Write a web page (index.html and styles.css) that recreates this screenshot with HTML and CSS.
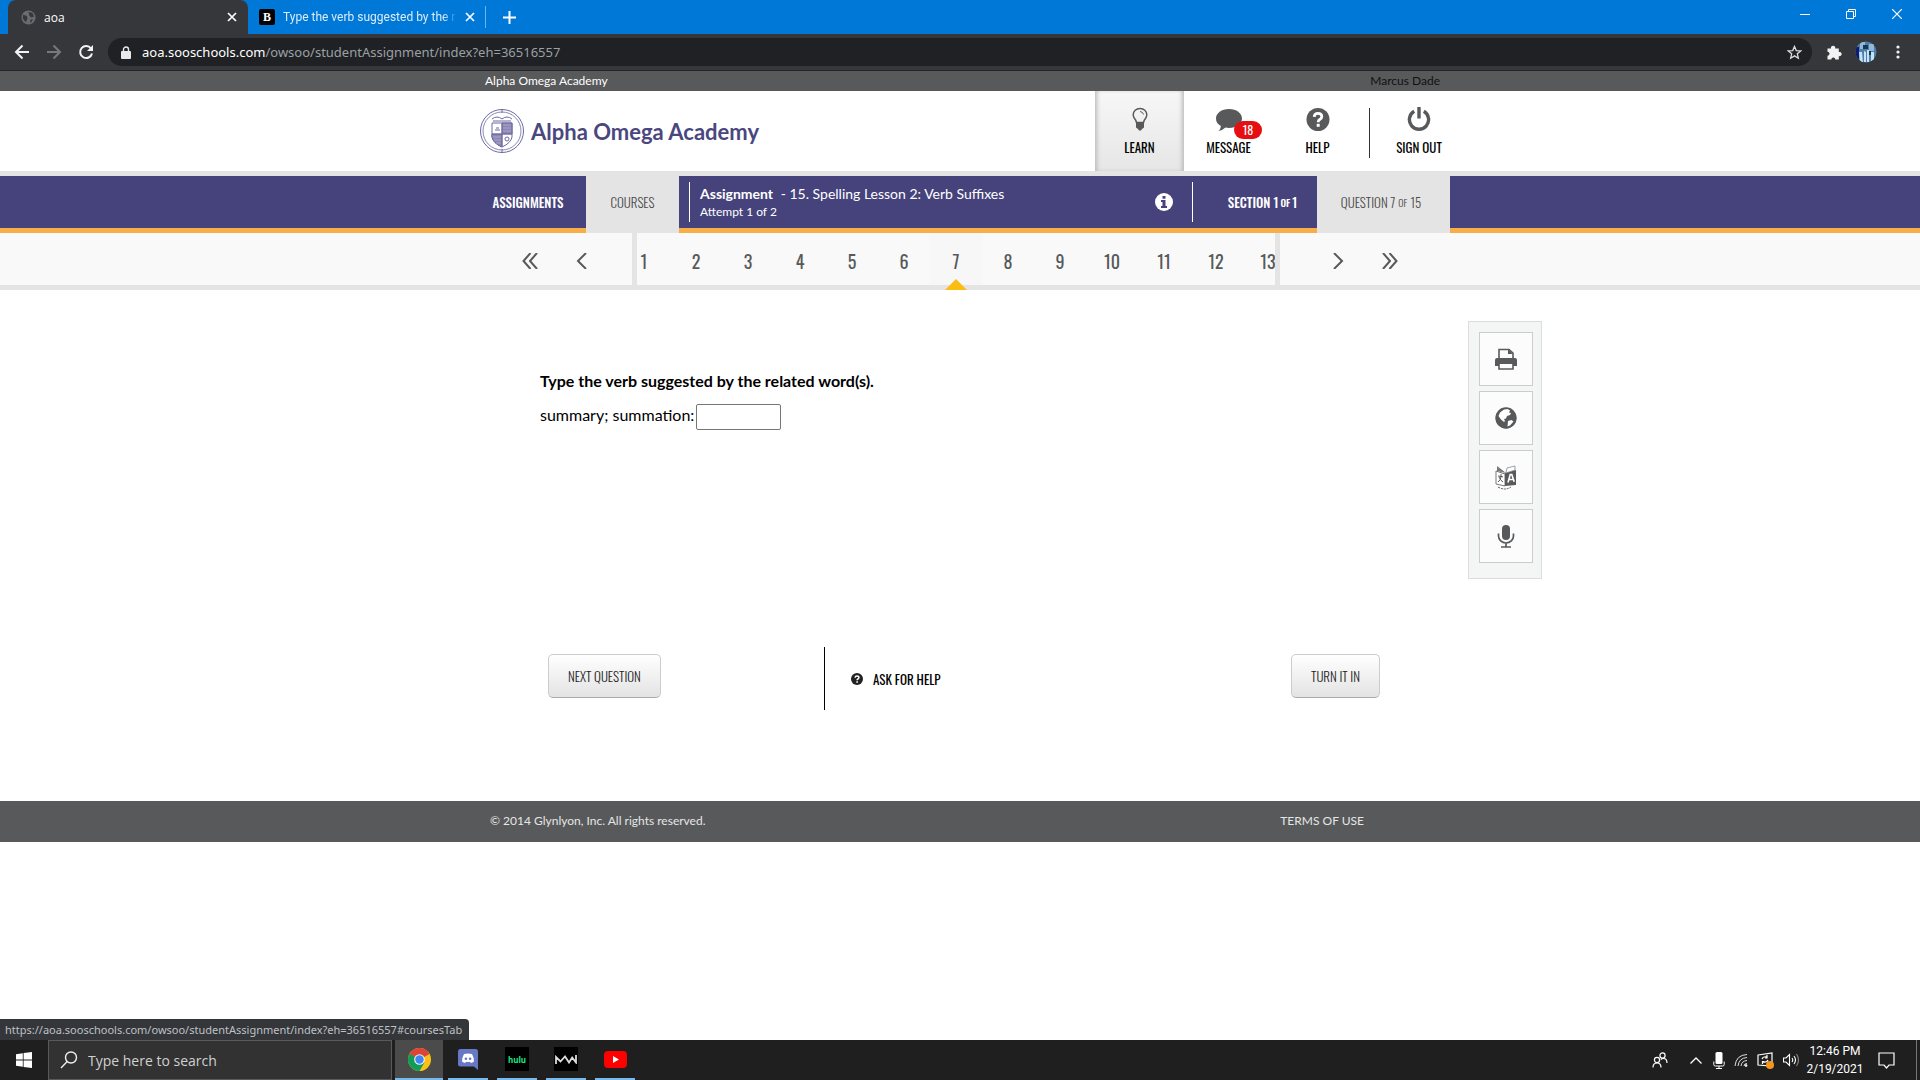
FILE: index.html
```html
<!DOCTYPE html>
<html lang="en">
<head>
    <meta charset="UTF-8">
    <title>aoa</title>
    <meta name="viewport" content="width=device-width, initial-scale=1.0">
    <link rel="stylesheet" href="styles.css">
</head>
<body>
    <!-- browser tabs -->
    <div class="tabstrip">
        <div class="tab active">
            <svg width="15" height="15" viewBox="0 0 16 16"><circle cx="8" cy="8" r="7.5" fill="#6b6c6f"/><path d="M2 5l4 1 1 3-2 4-3-4zM8 2l4 1 2 4-3 1-2-2zM10 10l3 0-3 4z" fill="#36373b"/></svg>
            <span class="tab-title">aoa</span>
            <button class="tab-close" aria-label="Close tab"><svg width="10" height="10" viewBox="0 0 10 10"><path d="M1 1l8 8M9 1l-8 8" stroke="currentColor" stroke-width="1.7"/></svg></button>
        </div>
        <div class="tab">
            <span class="favicon-b">B</span>
            <span class="tab-title fade">Type the verb suggested by the r</span>
            <button class="tab-close" aria-label="Close tab"><svg width="10" height="10" viewBox="0 0 10 10"><path d="M1 1l8 8M9 1l-8 8" stroke="currentColor" stroke-width="1.7"/></svg></button>
        </div>
        <button class="new-tab" aria-label="New tab"><svg width="13" height="13" viewBox="0 0 13 13"><path d="M6.5 0v13M0 6.5h13" stroke="currentColor" stroke-width="2"/></svg></button>
        <div class="window-buttons">
            <button aria-label="Minimize"><svg width="10" height="10" viewBox="0 0 10 10"><path d="M0 5.5h10" stroke="currentColor"/></svg></button>
            <button aria-label="Restore"><svg width="10" height="10" viewBox="0 0 10 10" fill="none" stroke="currentColor"><path d="M.5 2.5h7v7h-7zM2.500 2.500v-2h7v7h-2"/></svg></button>
            <button aria-label="Close"><svg width="10" height="10" viewBox="0 0 10 10"><path d="M0 0l10 10M10 0l-10 10" stroke="currentColor" stroke-width="1.2"/></svg></button>
        </div>
    </div>
    <div class="toolbar">
        <button aria-label="Back"><svg width="16" height="16" viewBox="0 0 16 16" fill="none" stroke="#f1f3f4" stroke-width="2"><path d="M15 8H2M8.500 1.500L2 8l6.500 6.500"/></svg></button>
        <button aria-label="Forward"><svg width="16" height="16" viewBox="0 0 16 16" fill="none" stroke="#77797d" stroke-width="2"><path d="M1 8h13M7.500 1.500L14 8l-6.500 6.500"/></svg></button>
        <button aria-label="Reload"><svg width="16" height="16" viewBox="0 0 16 16"><path d="M13 4.500A6 6 0 1 0 14 9.500" fill="none" stroke="#f1f3f4" stroke-width="2"/><path d="M15 1v6H9z" fill="#f1f3f4"/></svg></button>
        <div class="omnibox">
            <svg width="10" height="13" viewBox="0 0 10 13"><rect y="5" width="10" height="8" rx="1" fill="#e8eaed"/><path d="M2.500 5V3.500a2.500 2.500 0 0 1 5 0V5" fill="none" stroke="#e8eaed" stroke-width="1.400"/></svg>
            <span class="url"><b>aoa.sooschools.com</b>/owsoo/studentAssignment/index?eh=36516557</span>
            <button aria-label="Bookmark this tab"><svg width="15" height="15" viewBox="0 0 16 16"><path d="M8 1.500l1.900 4.400 4.700.4-3.600 3.100 1.100 4.700L8 11.600l-4.100 2.500L5 9.400 1.400 6.300l4.700-.4z" fill="none" stroke="#dadce0" stroke-width="1.400"/></svg></button>
        </div>
        <button aria-label="Extensions"><svg width="16" height="16" viewBox="0 0 16 16"><path d="M1.500 4.500H5a2.200 2.200 0 1 1 4.200 0h3.600V8a2.200 2.200 0 1 1 0 4.200v3.300H9.300a2 2 0 0 0-4 0H1.500v-3.700a2 2 0 0 0 0-4z" fill="#f1f3f4"/></svg></button>
        <button aria-label="Profile"><svg width="22" height="22" viewBox="0 0 22 22"><defs><clipPath id="av"><circle cx="11" cy="11" r="10.500"/></clipPath></defs><g clip-path="url(#av)"><path fill="#4f7ea8" d="M0 0h22v22H0z"/><path fill="#8fb9dc" d="M5 1h5v7H5zM14 3h5v7h-5z"/><path fill="#0d1b70" d="M0 6h4v13H0z"/><path fill="#c4e3f6" d="M4 11h3l1 11H5zM9 10l2 1v10H9zM12 9h2v12h-2zM16 11h3v9h-3z"/><path fill="#1d3450" d="M8 4h5v4H8zM14 10h2v4h-2z"/></g></svg></button>
        <button aria-label="Menu"><svg width="4" height="16" viewBox="0 0 4 16" fill="#f1f3f4"><circle cx="2" cy="3" r="1.600"/><circle cx="2" cy="8" r="1.600"/><circle cx="2" cy="13" r="1.600"/></svg></button>
    </div>

    <div class="page">
        <div class="topbar">
            <div class="container">
                <span>Alpha Omega Academy</span>
                <span class="user">Marcus Dade</span>
            </div>
        </div>

        <header class="header">
            <div class="container">
                <a class="logo" href="#">
                    <svg width="46" height="46" viewBox="0 0 46 46" fill="none" stroke="#6c69a0">
                        <circle cx="23" cy="23" r="21.500"/><circle cx="23" cy="23" r="19" stroke-width=".8"/>
                        <path d="M23 1v4M23 41v4M13 11q5-4 10 0q5-4 10 0M14 13h18" />
                        <path d="M13 15h20v14q-1 6-10 10q-9-4-10-10z"/>
                        <path d="M23 15h10v11H23zM13 26h10v13q-9-4-10-10z" fill="#8a87b5"/>
                        <path d="M23 15v24M13 26h20" stroke-width=".8"/>
                        <path d="M16 22h5M17 20h3" /><circle cx="28" cy="31" r="2"/>
                        <path d="M24 17h8M24 20h8M24 23h8M14 29h8M15 32h7M17 35h5" stroke="#c0bedb" stroke-width=".6"/>
                    </svg>
                    <span>Alpha Omega Academy</span>
                </a>
                <nav class="menu">
                    <a class="menu-item active" href="#">
                        <svg width="24" height="24" viewBox="0 0 24 24"><path d="M8.500 15.500Q8 13 6.200 11a7 7 0 0 1-1-3.200C5.200 4 8.200 1.500 12 1.500S18.800 4 18.800 7.800a7 7 0 0 1-1 3.200Q16 13 15.500 15.500z" fill="none" stroke="#58595b" stroke-width="1.500"/><path d="M12 4.500q3 .3 3.500 3" fill="none" stroke="#58595b"/><path d="M8 15.500h8v5l-2 1.500-1 1.500h-2L10 22l-2-1.500z" fill="#58595b"/></svg>
                        <span>LEARN</span>
                    </a>
                    <a class="menu-item" href="#">
                        <svg width="28" height="24" viewBox="0 0 28 24"><path d="M14 2c7.500 0 13 4.200 13 9.500S21.500 21 14 21q-2 0-3.500-.4Q7.500 23.500 3.500 24q2.200-2 2.400-5Q1 16.500 1 11.500C1 6.200 6.500 2 14 2z" fill="#58595b"/></svg>
                        <span class="badge">18</span>
                        <span>MESSAGE</span>
                    </a>
                    <a class="menu-item" href="#">
                        <svg width="24" height="24" viewBox="0 0 24 24"><circle cx="12" cy="12.500" r="11.500" fill="#58595b"/><path d="M8.200 9.800Q8.400 6.400 12 6.400q3.800 0 3.800 3.200 0 1.900-2 2.900-1.600.8-1.600 2.700" fill="none" stroke="#fff" stroke-width="2.800"/><path d="M10.700 16.800h3v3h-3z" fill="#fff"/></svg>
                        <span>HELP</span>
                    </a>
                    <a class="menu-item signout" href="#">
                        <svg width="24" height="24" viewBox="0 0 24 24" fill="none" stroke="#58595b" stroke-width="3.400"><path d="M7.200 4.300a9.600 9.600 0 1 0 9.600 0M12 0v11.500"/></svg>
                        <span>SIGN OUT</span>
                    </a>
                </nav>
            </div>
        </header>

        <nav class="subnav">
            <div class="container">
                <a class="subtab assignments" href="#">ASSIGNMENTS</a>
                <a class="subtab courses active" href="#coursesTab">COURSES</a>
                <div class="assignment">
                    <div class="assignment-text">
                        <div class="assignment-title"><b>Assignment</b> - 15. Spelling Lesson 2: Verb Suffixes</div>
                        <div class="attempt">Attempt 1 of 2</div>
                    </div>
                    <button class="info" aria-label="Assignment info"><svg width="18" height="18" viewBox="0 0 18 18"><circle cx="9" cy="9" r="9" fill="#fff"/><path d="M7.500 3h3v2.700h-3zM6 7h4.500v6H12v2H6v-2h1.500V9H6z" fill="#46437c"/></svg></button>
                </div>
                <a class="subtab section" href="#">SECTION 1 <small>OF</small> 1</a>
                <a class="subtab question active" href="#">QUESTION 7 <small>OF</small> 15</a>
            </div>
        </nav>

        <div class="pager">
            <div class="container">
                <div class="pager-side prev">
                    <button aria-label="First"><svg width="16" height="16" viewBox="0 0 16 16"><path d="M8.500 0L1.500 8l7 8M15 0L8 8l7 8"/></svg></button>
                    <button aria-label="Previous"><svg width="16" height="16" viewBox="0 0 16 16"><path d="M12 0L4 8l8 8"/></svg></button>
                </div>
                <div class="pages">
                    <button>1</button>
                    <button>2</button>
                    <button>3</button>
                    <button>4</button>
                    <button>5</button>
                    <button>6</button>
                    <button class="current">7</button>
                    <button>8</button>
                    <button>9</button>
                    <button>10</button>
                    <button>11</button>
                    <button>12</button>
                    <button>13</button>
                </div>
                <div class="pager-side next">
                    <button aria-label="Next"><svg width="16" height="16" viewBox="0 0 16 16"><path d="M4 0l8 8-8 8"/></svg></button>
                    <button aria-label="Last"><svg width="16" height="16" viewBox="0 0 16 16"><path d="M1 0l7 8-7 8M7.500 0l7 8-7 8"/></svg></button>
                </div>
            </div>
        </div>

        <main class="content">
            <div class="question-area">
                <div class="question-body">
                    <p class="prompt">Type the verb suggested by the related word(s).</p>
                    <p class="answer">
                        <label for="answer">summary; summation:</label>
                        <input type="text" id="answer">
                    </p>
                </div>
                <div class="actions">
                    <button class="btn">NEXT QUESTION</button>
                    <a class="ask" href="#">
                        <svg width="12" height="12" viewBox="0 0 24 24"><circle cx="12" cy="12" r="12" fill="#222"/><path d="M8 9.500Q8.400 6.200 12 6.200q3.800 0 3.800 3 0 1.900-2 2.800-1.600.8-1.600 2.500" fill="none" stroke="#fff" stroke-width="3"/><path d="M10.600 16.500h3.200v3h-3.200z" fill="#fff"/></svg>
                        ASK FOR HELP
                    </a>
                    <button class="btn">TURN IT IN</button>
                </div>
            </div>
            <aside class="tools">
                <button aria-label="Print"><svg width="24" height="22" viewBox="0 0 24 22"><path d="M1 12q0-2 2-2h18q2 0 2 2v6h-4v-2H5v2H1z" fill="#58595b"/><path d="M5 11V1.500h10l4 3.500v6M5 16v5h14v-5" fill="none" stroke="#58595b" stroke-width="1.600"/><path d="M14 1l5 5h-5z" fill="#58595b"/></svg></button>
                <button aria-label="Web"><svg width="22" height="22" viewBox="0 0 22 22"><circle cx="11" cy="11" r="10.300" fill="#58595b"/><path d="M9 2.500l4-.5 2 1.500-1 2 2 .5-1 2-3 1-1 2.500-2 .5 1 2-1 1-3-2.500L3.500 9 5 5.500zM13 14l3.500-1 2 1.500L15 18.500l-2.500 1z" fill="#fff"/><circle cx="11" cy="11" r="10" fill="none" stroke="#58595b" stroke-width="1.300"/></svg></button>
                <button aria-label="Translate"><svg width="24" height="26" viewBox="0 0 24 26"><path d="M2 7l9 3v12l-9-2z" fill="#fff" stroke="#77787a"/><path d="M11 9l11-3v15l-11 1z" fill="#58595b"/><path d="M3 2v5l9 2z" fill="#77787a"/><path d="M13 4l8-2v4l-9 3z" fill="#fff" stroke="#77787a" stroke-width=".7"/><path d="M4 12l5 .8M7 10v2.500Q7 16 4 18M5 13q1 3 4 5" fill="none" stroke="#58595b"/><path d="M14 18.500l2.200-8h1.600l2.400 7.200M14.800 15.500h4.200" fill="none" stroke="#fff" stroke-width="1.600"/><path d="M4 23q7 4 13 0" fill="none" stroke="#58595b" stroke-dasharray="2 1"/></svg></button>
                <button aria-label="Record"><svg width="18" height="24" viewBox="0 0 18 24"><rect x="5" y="1" width="8" height="15" rx="4" fill="#58595b"/><path d="M1.500 9.500v2.500a7.500 7 0 0 0 15 0V9.500M9 19v4M4 23h10" fill="none" stroke="#58595b" stroke-width="1.700"/></svg></button>
            </aside>
        </main>

        <footer class="footer">
            <div class="container">
                <span>© 2014 Glynlyon, Inc. All rights reserved.</span>
                <a href="#">TERMS OF USE</a>
            </div>
        </footer>
        <div class="status">https://aoa.sooschools.com/owsoo/studentAssignment/index?eh=36516557#coursesTab</div>
    </div>

    <!-- windows taskbar -->
    <div class="taskbar">
        <button class="start" aria-label="Start"><svg width="16" height="16" viewBox="0 0 16 16" fill="#fff"><path d="M0 2.200L6.800 1.200v6.400H0zM7.600 1.100L16 0v7.600H7.600zM0 8.400h6.800v6.400L0 13.800zM7.600 8.400H16V16l-8.400-1.100z"/></svg></button>
        <label class="search" for="search">
            <svg width="18" height="18" viewBox="0 0 18 18" fill="none" stroke="#f0f0f0" stroke-width="1.400"><circle cx="11" cy="6.500" r="5.500"/><path d="M7.200 10.500L1 17"/></svg>
            <input type="text" id="search" placeholder="Type here to search">
        </label>
        <button class="app focus" aria-label="Chrome"><svg width="23" height="23" viewBox="0 0 24 24"><circle cx="12" cy="12" r="12" fill="#fbc116"/><path d="M12 12L1.600 6A12 12 0 0 1 22.400 6z" fill="#db4437"/><path d="M1.600 6A12 12 0 0 0 12 24l5.200-9z" fill="#0f9d58"/><path d="M12 6h10.400L12 12zM6.800 15L1.600 6 12 12z" fill="#db4437"/><path d="M1.600 6l5.200 9L12 12z" fill="#0f9d58"/><circle cx="12" cy="12" r="5.600" fill="#f1f1f1"/><circle cx="12" cy="12" r="4.400" fill="#4285f4"/></svg></button>
        <button class="app" aria-label="Discord"><svg width="20" height="21" viewBox="0 0 20 21"><path d="M2.500 0h15A2.500 2.500 0 0 1 20 2.500V21l-4-3.500H2.500A2.500 2.500 0 0 1 0 15V2.500A2.500 2.500 0 0 1 2.500 0z" fill="#6778c4"/><path d="M6 5q4-1 8 0 2 3.500 2 7.500-1.500 1.300-3.200 1.500l-.8-1.300q-2 .6-4 0L7.200 14Q5.500 13.800 4 12.500 4 8.500 6 5z" fill="#fff"/><circle cx="7.900" cy="9.700" r="1.300" fill="#6778c4"/><circle cx="12.100" cy="9.700" r="1.300" fill="#6778c4"/></svg></button>
        <button class="app"><span class="tile hulu">hulu</span></button>
        <button class="app" aria-label="Modern Warfare"><span class="tile"><svg width="22" height="9" viewBox="0 0 22 9" fill="none" stroke="#ddd" stroke-width="1.800"><path d="M1 9V2l4.500 4.500L10 1.500l4 6 3.200-5 3.800 5V0"/></svg></span></button>
        <button class="app" aria-label="YouTube"><svg width="23" height="17" viewBox="0 0 23 17"><rect width="23" height="17" rx="4" fill="#f00"/><path d="M9 5l6 3.500L9 12z" fill="#fff"/></svg></button>
        <div class="tray">
            <svg class="people" width="16" height="16" viewBox="0 0 16 16" fill="none" stroke="#fff" stroke-width="1.200"><circle cx="10.500" cy="3.500" r="2.600"/><circle cx="5" cy="8" r="2.600"/><path d="M1 15.500q0-4.500 4-4.500t4 4.500M8.800 7.500q1-1 2.700-1 3.500 0 3.500 4.500"/></svg>
            <svg class="chevron" width="12" height="7" viewBox="0 0 12 7" fill="none" stroke="#fff" stroke-width="1.300"><path d="M.5 6.500L6 1l5.500 5.500"/></svg>
            <svg width="12" height="17" viewBox="0 0 12 17"><rect x="2.500" width="7" height="12" rx="1.500" fill="#fff"/><path d="M.8 9.500v3q0 1.500 1.500 1.500h7.400q1.500 0 1.500-1.500v-3M6 14v2.500M3 16.500h6" fill="none" stroke="#fff"/></svg>
            <svg width="14" height="14" viewBox="0 0 14 14" fill="none" stroke="#ddd"><path d="M1 13Q2 2 13 1.500M4 13Q5 5 13 4.500M7 13q.5-5 6-5.500M10 13q0-2.500 3-2.500"/><circle cx="12" cy="12.500" r="1" fill="#fff"/></svg>
            <svg width="17" height="17" viewBox="0 0 17 17" fill="none" stroke="#fff" stroke-width="1.200"><path d="M1 3l14-2v13L1 13zM5 7q1-3 5-2M10 3v3H8M11 8q-1 3-5 2M5.500 12v-2.500h2"/><circle cx="13" cy="13" r="4" fill="#f7941d" stroke="none"/></svg>
            <svg width="17" height="14" viewBox="0 0 17 14" fill="none" stroke="#fff" stroke-width="1.100"><path d="M.5 5H3l3.500-3.500v11L3 9H.5zM9 5q1.500 2 0 4M11 3q3 4 0 8"/><path d="M13.500 1q4 6 0 12" stroke="#888"/></svg>
            <div class="clock"><span>12:46 PM</span><span>2/19/2021</span></div>
            <svg class="notif" width="17" height="17" viewBox="0 0 17 17" fill="none" stroke="#fff" stroke-width="1.200"><path d="M1 1h15v12h-5l-2.500 3L6 13H1z"/></svg>
        </div>
    </div>
</body>
</html>
```

FILE: styles.css
```css
* { box-sizing: border-box; }
body { margin: 0; height: 100vh; display: flex; flex-direction: column; overflow: hidden; background: #fff; font-family: "Lato", "Open Sans", sans-serif; color: #000; }
button { padding: 0; border: 0; background: none; color: inherit; font: inherit; cursor: pointer; }
button, a { display: flex; align-items: center; justify-content: center; }
a { color: inherit; text-decoration: none; }
svg { display: block; flex: none; }
.container { width: 980px; max-width: 100%; margin: 0 auto; display: flex; }

/* browser */
.tabstrip { height: 34px; flex: none; display: flex; align-items: stretch; padding-left: 8px; background: #0078d7; color: #fff; font: 12px "Open Sans", sans-serif; }
.tab { width: 238px; display: flex; align-items: center; gap: 8px; padding: 0 10px 0 11px; border-right: 1px solid #6db5ec; border-image: linear-gradient(#0078d7 20%, #6db5ec 20%, #6db5ec 80%, #0078d7 80%) 1; }
.tab.active { width: 240px; padding: 0 11px 0 13px; border: 0; background: #36373b; border-radius: 8px 8px 0 0; }
.tab-title { flex: 1; overflow: hidden; white-space: nowrap; }
.tab-title.fade { color: #d9ecfb; font-family: "Roboto", sans-serif; -webkit-mask-image: linear-gradient(90deg, #000 92%, transparent); mask-image: linear-gradient(90deg, #000 92%, transparent); }
.favicon-b { width: 16px; height: 16px; background: #000; border-radius: 2px; text-align: center; font: bold 12px/16px "Liberation Serif", serif; }
.new-tab { width: 46px; }
.window-buttons { margin-left: auto; display: flex; padding-bottom: 6px; }
.window-buttons button { width: 46px; }
.toolbar { height: 37px; flex: none; display: flex; align-items: center; padding: 0 6px; background: #36373b; border-bottom: 1px solid #242528; }
.toolbar > button { width: 32px; height: 28px; }
.omnibox { flex: 1; height: 28px; margin: 0 6px; padding: 0 10px 0 13px; display: flex; align-items: center; gap: 11px; border-radius: 14px; background: #202124; color: #9aa0a6; font: 13px "Noto Sans", "Open Sans", sans-serif; }
.omnibox .url { flex: 1; }
.omnibox b { font-weight: normal; color: #fff; }

/* site */
.page { flex: 1; min-height: 0; position: relative; overflow: hidden; }
.topbar { height: 20px; background: #58595b; color: #fff; font-size: 12px; line-height: 20px; }
.topbar .container { justify-content: space-between; padding: 0 10px 0 15px; }
.topbar .user { color: #111; }
.header { height: 85px; border-bottom: 5px solid #e4e4e4; }
.header .container { height: 80px; justify-content: space-between; }
.logo { gap: 6px; padding-left: 9px; color: #4a477f; font-size: 22px; font-weight: bold; }
.menu { display: flex; font: 13px/21px "Oswald", "Roboto Condensed", "Liberation Sans Narrow", sans-serif; }
.menu-item { width: 89px; position: relative; flex-direction: column; gap: 6px; padding-top: 2px; }
.menu-item.active { background: linear-gradient(#f7f7f7, #e6e6e6); box-shadow: inset 4px 0 4px -2px #bbb, inset -4px 0 4px -2px #bbb; }
.menu-item.signout { width: 88px; padding-left: 26px; }
.menu-item.signout::before { content: ""; position: absolute; left: 7px; top: 17px; width: 1px; height: 50px; background: #333; }
.badge { position: absolute; left: 50px; top: 30px; width: 28px; height: 18px; border-radius: 9px; background: #e50f12; color: #fff; text-align: center; font-size: 12px; line-height: 18px; }
.subnav { background: #46437c; border-bottom: 5px solid #f8ae47; color: #fff; font: 13px "Oswald", "Roboto Condensed", "Liberation Sans Narrow", sans-serif; }
.subnav .container { height: 52px; }
.subtab { font-weight: 500; gap: 2px; }
.subtab small { font-size: 10px; }
.subtab.active { background: #e4e4e4; color: #4a4a4a; font-weight: 300; margin-bottom: -5px; padding-bottom: 5px; }
.subtab.assignments { width: 116px; }
.subtab.courses { width: 93px; }
.subtab.section { flex: 1; padding-left: 15px; }
.subtab.question { width: 133px; padding-right: 5px; gap: 3px; }
.assignment { width: 504px; height: 40px; margin: 6px 0 0 10px; padding: 0 19px 0 10px; display: flex; justify-content: space-between; align-items: center; border-left: 1px solid #fff; border-right: 1px solid #fff; font-family: "Lato", sans-serif; }
.assignment-text { padding-top: 2px; }
.assignment-title { font-size: 14px; line-height: 18px; }
.assignment-title b { margin-right: 4px; }
.attempt { font-size: 12px; line-height: 18px; }
.pager { background: #f9f9f9; border-bottom: 5px solid #e4e4e4; color: #58595b; }
.pager .container { height: 52px; }
.pager-side { display: flex; }
.pager-side.prev { width: 162px; padding-left: 34px; }
.pager-side.next { width: 170px; padding-left: 32px; }
.pager-side svg { fill: none; stroke: #58595b; stroke-width: 2; }
.pager button { width: 52px; flex: none; padding-top: 4px; }
.pages { flex: 1; display: flex; justify-content: center; border: solid #e4e4e4; border-width: 0 5px; overflow: hidden; margin-bottom: -5px; padding-bottom: 5px; font: 18px "Oswald", "Roboto Condensed", "Liberation Sans Narrow", sans-serif; }
.pages .current { position: relative; background: #f7f7f7; }
.pages .current::after { content: ""; position: absolute; bottom: -5px; left: 15px; border: 11px solid transparent; border-top: 0; border-bottom-color: #fbbc14; }

.content { display: grid; grid-template-columns: 1fr 980px 1fr; height: 511px; }
.question-area { grid-column: 2; padding: 79px 70px 0; font-size: 16px; }
.question-body { height: 278px; }
.question-body p { margin: 0; }
.prompt { font-weight: bold; line-height: 24px; }
.question-body .answer { display: flex; align-items: flex-start; gap: 2px; margin-top: 11px; line-height: 22px; }
.answer input { width: 85px; height: 26px; padding: 1px 2px; border: 1px solid #767676; border-radius: 2px; font: inherit; }
.actions { display: flex; height: 63px; padding-left: 8px; font: 300 13px "Oswald", "Roboto Condensed", "Liberation Sans Narrow", sans-serif; }
.btn { height: 44px; margin-top: 7px; padding: 0 19px; border: 1px solid #ccc; border-bottom-color: #aaa; border-radius: 5px; background: linear-gradient(#fff, #e3e3e3); color: #222; }
.ask { margin-left: 163px; padding-left: 26px; gap: 10px; border-left: 1px solid #000; font-weight: 400; }
.ask + .btn { margin-left: auto; }
.tools { width: 74px; height: 258px; margin: 31px 0 0 18px; padding: 10px; display: flex; flex-direction: column; gap: 5px; background: #f4f5f5; border: 1px solid #ddd; }
.tools button { width: 54px; height: 54px; background: #fcfcfc; border: 1px solid #ccc; }
.footer { height: 41px; background: #58595b; color: #e6e6e6; font-size: 12px; line-height: 40px; }
.footer .container { height: 40px; justify-content: space-between; padding: 0 86px 0 20px; }
.status { position: absolute; left: 0; bottom: 0; height: 21px; padding: 0 7px 0 5px; background: #35363a; border-radius: 0 4px 0 0; color: #bdc1c6; font: 11px/21px "Noto Sans", "Open Sans", sans-serif; }

/* taskbar */
.taskbar { height: 40px; flex: none; display: flex; background: #1f1f1f; color: #fff; font: 12px "Open Sans", sans-serif; }
.start { width: 48px; }
.search { width: 344px; display: flex; align-items: center; gap: 10px; padding-left: 11px; margin-right: 3px; background: #323232; border: 1px solid #5a5a5a; }
.search input { flex: 1; border: 0; padding: 0; background: none; font: 14px "Open Sans", sans-serif; }
.search input::placeholder { color: #d0d0d0; opacity: 1; }
.app { width: 40px; margin: 0 5px 0 4px; border-bottom: 2px solid #76b9ed; }
.app.focus { width: 48px; margin: 0 1px 0 0; background: #4b4b4b; }
.tile { width: 24px; height: 24px; display: flex; align-items: center; justify-content: center; background: #000; }
.hulu { color: #1ce783; font-size: 8px; font-weight: bold; }
.tray { margin-left: auto; display: flex; align-items: center; gap: 9px; padding-right: 3px; }
.people { margin-right: 13px; }
.chevron { margin-right: 2px; }
.clock { width: 52px; margin-right: 8px; display: flex; flex-direction: column; align-items: center; line-height: 18px; font-family: "Roboto", sans-serif; }
.notif { margin-right: 12px; }
.tray::after { content: ""; width: 1px; height: 40px; background: #777; }
```
